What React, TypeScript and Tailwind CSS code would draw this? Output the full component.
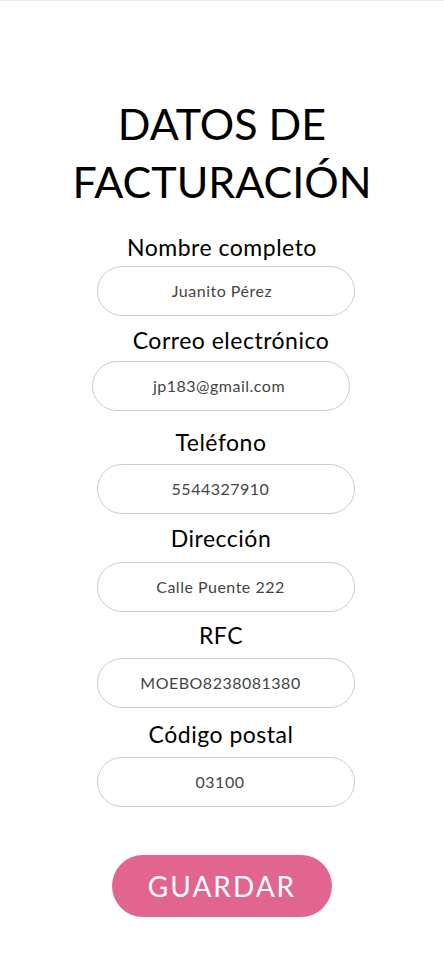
import React from "react";

type Field = {
  label: string;
  value: string;
  labelCls: string;
  boxCls: string;
  textCls: string;
};

const fields: Field[] = [
  {
    label: "Nombre completo",
    value: "Juanito Pérez",
    labelCls: "mt-[22px] mr-0",
    boxCls: "mt-[5px] ml-[8px]",
    textCls: "pr-[8px]",
  },
  {
    label: "Correo electrónico",
    value: "jp183@gmail.com",
    labelCls: "mt-[10px] ml-[18px]",
    boxCls: "mt-[7px] mr-[3px]",
    textCls: "pr-[3px]",
  },
  {
    label: "Teléfono",
    value: "5544327910",
    labelCls: "mt-[17px] mr-[2px]",
    boxCls: "mt-[8px] ml-[8px]",
    textCls: "pr-[11px]",
  },
  {
    label: "Dirección",
    value: "Calle Puente 222",
    labelCls: "mt-[10px] mr-[2px]",
    boxCls: "mt-[10px] ml-[8px]",
    textCls: "pr-[11px]",
  },
  {
    label: "RFC",
    value: "MOEBO8238081380",
    labelCls: "mt-[9px] mr-[2px]",
    boxCls: "mt-[9px] ml-[8px]",
    textCls: "pr-[11px]",
  },
  {
    label: "Código postal",
    value: "03100",
    labelCls: "mt-[12px] mr-[2px]",
    boxCls: "mt-[9px] ml-[8px]",
    textCls: "pr-[12px]",
  },
];

export default function App() {
  return (
    <div
      className="w-full min-h-[966px] bg-white border-t border-[#ececec] flex flex-col items-center text-black"
      style={{ fontFamily: "Lato, 'Noto Sans', sans-serif" }}
    >
      <h1 className="mt-[94px] text-[43px] leading-[58px] font-normal text-center">
        DATOS DE
        <br />
        FACTURACIÓN
      </h1>
      {fields.map((f) => (
        <React.Fragment key={f.label}>
          <div className={`text-[23px] leading-[28px] tracking-[0.5px] ${f.labelCls}`}>{f.label}</div>
          <div
            className={`w-[258px] h-[50px] rounded-full border border-[#cccccc] flex items-center justify-center text-[16px] tracking-[0.5px] text-[#444444] ${f.boxCls}`}
          >
            <span className={f.textCls}>{f.value}</span>
          </div>
        </React.Fragment>
      ))}
      <button className="mt-[48px] w-[220px] h-[62px] rounded-full bg-[#e1658e] text-white text-[28px] tracking-[2px] flex items-center justify-center">
        GUARDAR
      </button>
    </div>
  );
}
